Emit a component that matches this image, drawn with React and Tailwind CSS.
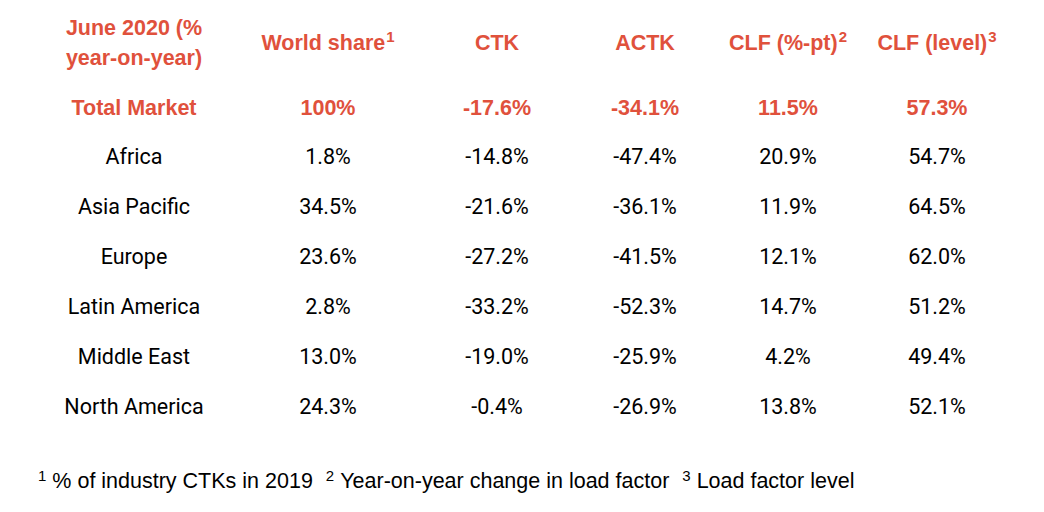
import React from "react";

const cols = ["w-[194px]", "w-[194px]", "w-[144px]", "w-[152px]", "w-[134px]", "w-[164px]"];

const rows = [
  ["Africa", "1.8%", "-14.8%", "-47.4%", "20.9%", "54.7%"],
  ["Asia Pacific", "34.5%", "-21.6%", "-36.1%", "11.9%", "64.5%"],
  ["Europe", "23.6%", "-27.2%", "-41.5%", "12.1%", "62.0%"],
  ["Latin America", "2.8%", "-33.2%", "-52.3%", "14.7%", "51.2%"],
  ["Middle East", "13.0%", "-19.0%", "-25.9%", "4.2%", "49.4%"],
  ["North America", "24.3%", "-0.4%", "-26.9%", "13.8%", "52.1%"],
];

const total = ["Total Market", "100%", "-17.6%", "-34.1%", "11.5%", "57.3%"];

function Sup({ children }) {
  return <sup className="text-[15px] font-bold ml-[1px]">{children}</sup>;
}

export default function App() {
  return (
    <div className="w-[1044px] h-[512px] bg-white overflow-hidden pl-[37px]">
      <div className="font-['Liberation_Sans',Arial,sans-serif] font-bold text-[#e0513c] text-[21.5px]">
        <div className="flex items-center h-[84px] pt-[2px]">
          <div className={`${cols[0]} text-center leading-[30px]`}>
            June 2020 (%<br />year-on-year)
          </div>
          <div className={`${cols[1]} text-center`}>World share<Sup>1</Sup></div>
          <div className={`${cols[2]} text-center`}>CTK</div>
          <div className={`${cols[3]} text-center`}>ACTK</div>
          <div className={`${cols[4]} text-center whitespace-nowrap`}>CLF (%-pt)<Sup>2</Sup></div>
          <div className={`${cols[5]} text-center whitespace-nowrap`}>CLF (level)<Sup>3</Sup></div>
        </div>
        <div className="flex items-center h-[48px]">
          {total.map((t, i) => (
            <div key={i} className={`${cols[i]} text-center`}>{t}</div>
          ))}
        </div>
      </div>
      <div className="font-['Roboto',sans-serif] text-[21.5px] text-black">
        {rows.map((r, ri) => (
          <div key={ri} className="flex items-center h-[50px]">
            {r.map((t, i) => (
              <div key={i} className={`${cols[i]} text-center`}>{t}</div>
            ))}
          </div>
        ))}
      </div>
      <div className="mt-[37px] pl-[1px] font-['Liberation_Sans',Arial,sans-serif] text-[21.5px] text-black whitespace-nowrap leading-[24px]">
        <sup className="text-[15px] mr-[6px]">1</sup>% of industry CTKs in 2019
        <sup className="text-[15px] ml-[13px] mr-[6px]">2</sup>Year-on-year change in load factor
        <sup className="text-[15px] ml-[13px] mr-[6px]">3</sup>Load factor level
      </div>
    </div>
  );
}
